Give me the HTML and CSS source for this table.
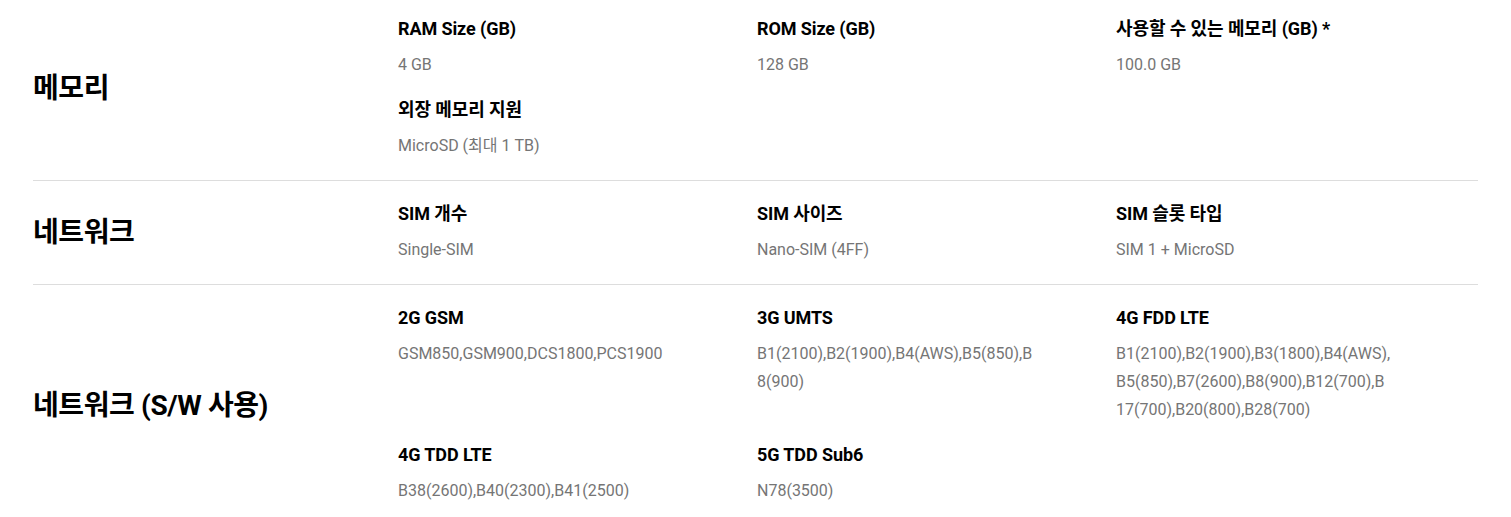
FILE: index.html
```html
<!DOCTYPE html>
<html lang="ko">
<head>
<meta charset="utf-8">
<title>사양</title>
<link rel="stylesheet" href="styles.css">
</head>
<body>
<div class="specs">
  <section class="spec-group">
    <h2 class="group-title">메모리</h2>
    <div class="group-items">
      <div class="item"><h3 class="item-title">RAM Size (GB)</h3><p class="item-value">4 GB</p></div>
      <div class="item"><h3 class="item-title">ROM Size (GB)</h3><p class="item-value">128 GB</p></div>
      <div class="item"><h3 class="item-title">사용할 수 있는 메모리 (GB) *</h3><p class="item-value">100.0 GB</p></div>
      <div class="item"><h3 class="item-title">외장 메모리 지원</h3><p class="item-value">MicroSD (최대 1 TB)</p></div>
    </div>
  </section>
  <section class="spec-group">
    <h2 class="group-title">네트워크</h2>
    <div class="group-items">
      <div class="item"><h3 class="item-title">SIM 개수</h3><p class="item-value">Single-SIM</p></div>
      <div class="item"><h3 class="item-title">SIM 사이즈</h3><p class="item-value">Nano-SIM (4FF)</p></div>
      <div class="item"><h3 class="item-title">SIM 슬롯 타입</h3><p class="item-value">SIM 1 + MicroSD</p></div>
    </div>
  </section>
  <section class="spec-group">
    <h2 class="group-title">네트워크 (S/W 사용)</h2>
    <div class="group-items">
      <div class="item"><h3 class="item-title">2G GSM</h3><p class="item-value">GSM850,GSM900,DCS1800,PCS1900</p></div>
      <div class="item"><h3 class="item-title">3G UMTS</h3><p class="item-value">B1(2100),B2(1900),B4(AWS),B5(850),B8(900)</p></div>
      <div class="item"><h3 class="item-title">4G FDD LTE</h3><p class="item-value">B1(2100),B2(1900),B3(1800),B4(AWS),B5(850),B7(2600),B8(900),B12(700),B17(700),B20(800),B28(700)</p></div>
      <div class="item"><h3 class="item-title">4G TDD LTE</h3><p class="item-value">B38(2600),B40(2300),B41(2500)</p></div>
      <div class="item"><h3 class="item-title">5G TDD Sub6</h3><p class="item-value">N78(3500)</p></div>
    </div>
  </section>
</div>
</body>
</html>
```

FILE: styles.css
```css
html, body {
  background: #ffffff;
}

body {
  margin: 0 33px;
  font-family: Roboto, "Noto Sans CJK KR", sans-serif;
  color: #000000;
}

.specs {
  display: flex;
  flex-direction: column;
}

.spec-group {
  display: flex;
  align-items: center;
  padding: 21px 0 20px;
  border-bottom: 1px solid #dddddd;
}

.spec-group:first-child {
  padding-top: 17px;
}

.group-title {
  width: 365px;
  flex: none;
  margin: 0;
  font-size: 28px;
  line-height: 36px;
  font-weight: 700;
  letter-spacing: -0.4px;
  color: #000000;
}

.group-items {
  flex: 1;
  display: grid;
  grid-template-columns: repeat(3, 359px);
  row-gap: 19px;
  align-items: start;
}

.item {
  display: flex;
  flex-direction: column;
  gap: 10px;
}

.item-title {
  margin: 0;
  font-size: 18px;
  line-height: 24px;
  font-weight: 700;
  letter-spacing: -0.1px;
  color: #000000;
}

.item-value {
  margin: 0;
  max-width: 276px;
  font-size: 16px;
  line-height: 28px;
  font-weight: 400;
  color: #757575;
  word-break: break-all;
}
```
